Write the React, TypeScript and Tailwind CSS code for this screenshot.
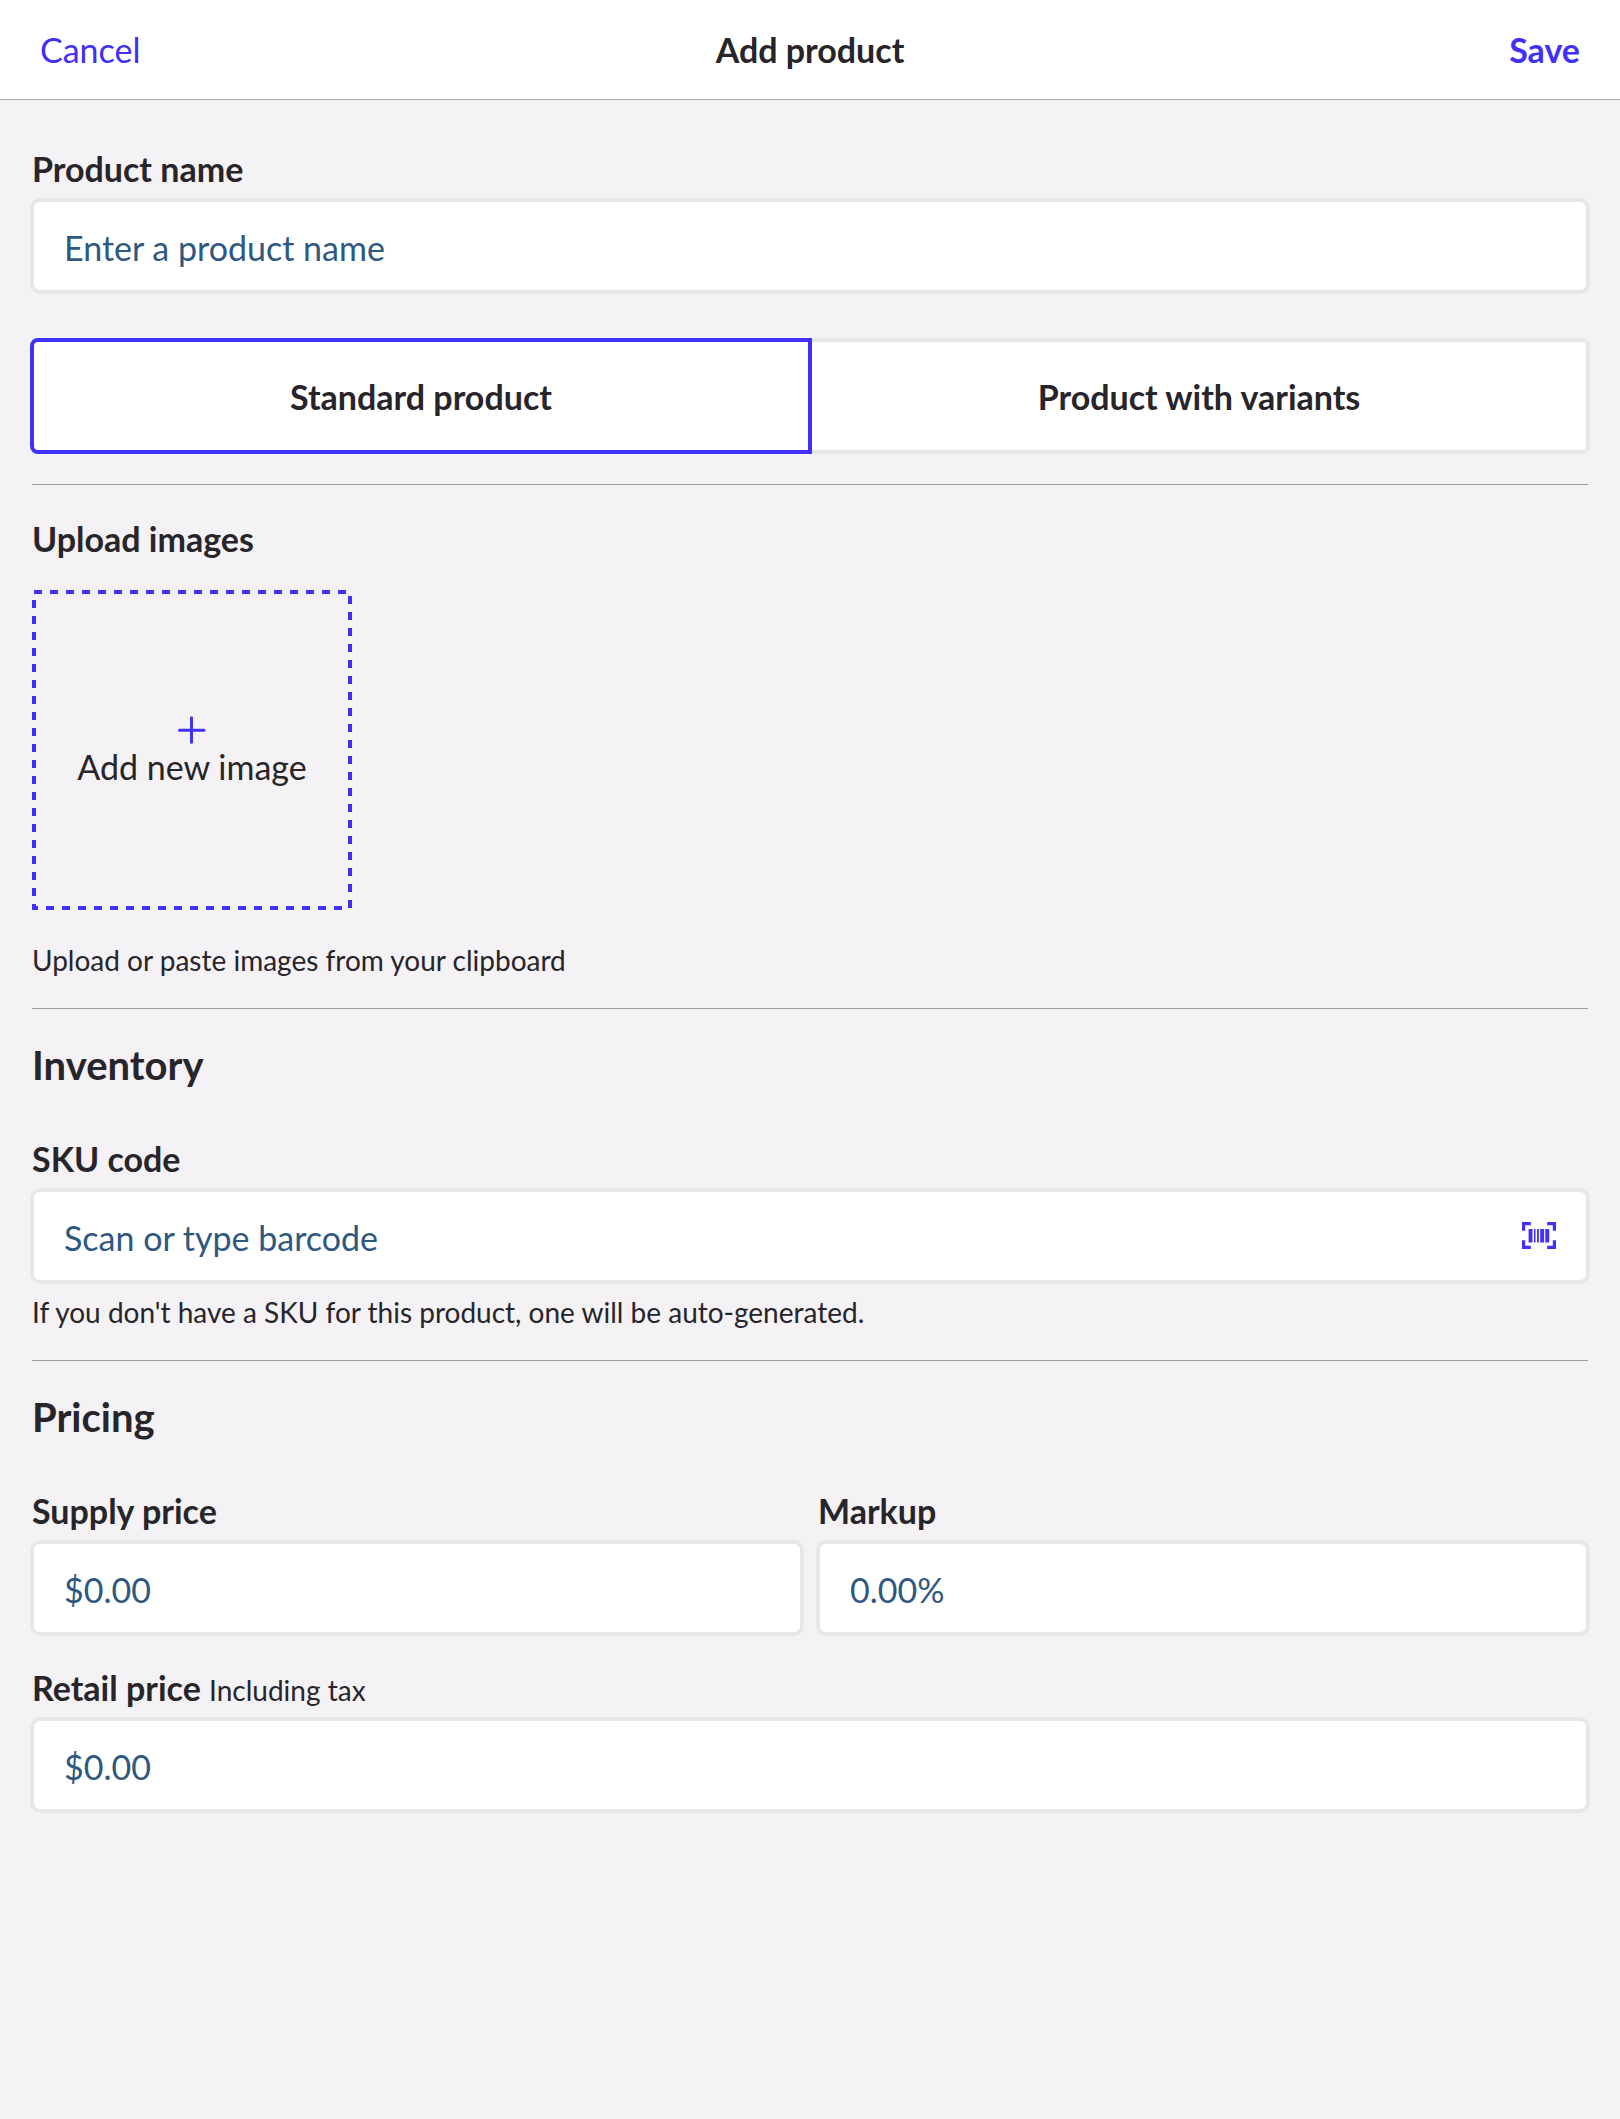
import React, { useState } from 'react';
import clsx from 'clsx';

type ProductType = 'standard' | 'variants';

const PRODUCT_TYPES: { value: ProductType; label: string }[] = [
  { value: 'standard', label: 'Standard product' },
  { value: 'variants', label: 'Product with variants' },
];

const PlusIcon = () => (
  <svg className="h-[34px] w-[34px]" viewBox="0 0 34 34" fill="none" aria-hidden="true">
    <path d="M16.5 4.8V29.2M4.5 17.3H29" stroke="currentColor" strokeWidth="3" strokeLinecap="round" />
  </svg>
);

const BarcodeIcon = () => (
  <svg className="h-7 w-[34px]" viewBox="0 0 34 28" aria-hidden="true">
    <path
      d="M1.6 8.8V1.6H8.8M25.2 1.6H32.4V8.8M32.4 18.2V25.4H25.2M8.8 25.4H1.6V18.2"
      fill="none"
      stroke="currentColor"
      strokeWidth="3.2"
    />
    <path
      d="M6.6 7H10.5V20.4H6.6ZM12 7H13.5V20.4H12ZM15 7H16.8V20.4H15ZM18.2 7H22.1V20.4H18.2ZM23.3 7H27.2V20.4H23.3Z"
      fill="currentColor"
    />
  </svg>
);

interface TextFieldProps {
  id: string;
  label: string;
  note?: string;
  placeholder: string;
  action?: React.ReactNode;
}

const TextField = ({ id, label, note, placeholder, action }: TextFieldProps) => (
  <div className="min-w-0 flex-1">
    <label htmlFor={id} className="block text-[34px] leading-[42px] font-bold">
      {label} {note && <span className="text-[28px] leading-none font-normal">{note}</span>}
    </label>
    <div className="-mx-0.5 mt-2 flex h-24 items-center rounded-[10px] border-4 border-[#e6e7e9] bg-white">
      <input
        id={id}
        type="text"
        placeholder={placeholder}
        className="h-full min-w-0 flex-1 rounded-md bg-transparent px-[30px] pt-0.5 text-[34px] outline-none placeholder:text-[#2f5880] placeholder:opacity-100"
      />
      {action}
    </div>
  </div>
);

const Divider = () => <hr className="border-t border-[#9d9ca1]" />;

export default function App() {
  const [productType, setProductType] = useState<ProductType>('standard');

  return (
    <div className="min-h-screen bg-[#f4f2f5] font-['Lato',sans-serif] text-[#27252a]">
      <header className="grid h-[100px] grid-cols-3 items-center border-b border-[#a3a6a1] bg-white px-10 text-[34px]">
        <button type="button" className="justify-self-start text-[#4030f8]">
          Cancel
        </button>
        <h1 className="text-center font-bold">Add product</h1>
        <button type="button" className="justify-self-end font-bold text-[#4030f8]">
          Save
        </button>
      </header>

      <main className="px-8 pt-12 pb-8">
        <TextField id="product-name" label="Product name" placeholder="Enter a product name" />

        <div className="-mx-0.5 mt-11 mb-[30px] flex">
          {PRODUCT_TYPES.map(({ value, label }) => (
            <button
              key={value}
              type="button"
              aria-pressed={productType === value}
              onClick={() => setProductType(value)}
              className={clsx(
                'h-[116px] flex-1 border-4 bg-white text-[34px] font-bold first:-mr-0.5 first:rounded-l-[8px] last:-ml-0.5 last:rounded-r-[8px]',
                productType === value ? 'relative border-[#4030f8]' : 'border-[#e6e7e9]'
              )}
            >
              {label}
            </button>
          ))}
        </div>

        <Divider />

        {/* Images */}
        <section className="pt-[33px] pb-[31px]">
          <h2 className="text-[34px] leading-[42px] font-bold">Upload images</h2>
          <button type="button" className="relative mt-[30px] flex size-80 flex-col items-center justify-center">
            <svg className="absolute inset-0 size-full text-[#4030f8]" viewBox="0 0 320 320" fill="none" aria-hidden="true">
              <rect x="2" y="2" width="316" height="316" stroke="currentColor" strokeWidth="4" strokeDasharray="8" />
            </svg>
            <span className="text-[#4030f8]">
              <PlusIcon />
            </span>
            <span className="text-[34px] leading-10">Add new image</span>
          </button>
          <p className="mt-[33px] text-[28px] leading-[34px]">Upload or paste images from your clipboard</p>
        </section>

        <Divider />

        {/* Inventory */}
        <section className="pt-8 pb-[31px]">
          <h2 className="mb-[49px] text-[40px] leading-[48px] font-bold">Inventory</h2>
          <TextField
            id="sku-code"
            label="SKU code"
            placeholder="Scan or type barcode"
            action={
              <button type="button" aria-label="Scan barcode" className="mr-[30px] text-[#4030f8]">
                <BarcodeIcon />
              </button>
            }
          />
          <p className="mt-[11px] text-[28px] leading-[34px]">
            If you don't have a SKU for this product, one will be auto-generated.
          </p>
        </section>

        <Divider />

        {/* Pricing */}
        <section className="pt-8">
          <h2 className="mb-[49px] text-[40px] leading-[48px] font-bold">Pricing</h2>
          <div className="mb-[31px] flex gap-4">
            <TextField id="supply-price" label="Supply price" placeholder="$0.00" />
            <TextField id="markup" label="Markup" placeholder="0.00%" />
          </div>
          <TextField id="retail-price" label="Retail price" note="Including tax" placeholder="$0.00" />
        </section>
      </main>
    </div>
  );
}
